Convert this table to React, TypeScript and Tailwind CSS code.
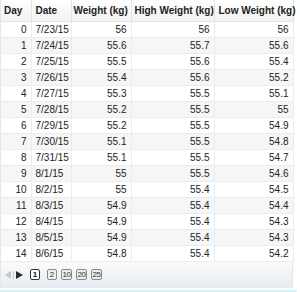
const rows: [number, string, string, string, string][] = [
  [0, "7/23/15", "56", "56", "56"],
  [1, "7/24/15", "55.6", "55.7", "55.6"],
  [2, "7/25/15", "55.5", "55.6", "55.4"],
  [3, "7/26/15", "55.4", "55.6", "55.2"],
  [4, "7/27/15", "55.3", "55.5", "55.1"],
  [5, "7/28/15", "55.2", "55.5", "55"],
  [6, "7/29/15", "55.2", "55.5", "54.9"],
  [7, "7/30/15", "55.1", "55.5", "54.8"],
  [8, "7/31/15", "55.1", "55.5", "54.7"],
  [9, "8/1/15", "55", "55.5", "54.6"],
  [10, "8/2/15", "55", "55.4", "54.5"],
  [11, "8/3/15", "54.9", "55.4", "54.4"],
  [12, "8/4/15", "54.9", "55.4", "54.3"],
  [13, "8/5/15", "54.9", "55.4", "54.3"],
  [14, "8/6/15", "54.8", "55.4", "54.2"],
];

const pages = ["1", "2", "10", "20", "25"];

export default function App() {
  return (
    <div className="w-[300px] h-[292px] bg-white font-['Liberation_Sans',Arial,sans-serif] text-[#222]">
      <div className="w-[293px] border-l border-[#e6e6e6]">
        <table className="table-fixed border-collapse w-[292px] text-[10px]">
          <colgroup>
            <col className="w-[30px]" />
            <col className="w-[40px]" />
            <col className="w-[60px]" />
            <col className="w-[83px]" />
            <col className="w-[79px]" />
          </colgroup>
          <thead>
            <tr className="h-[21px] bg-gradient-to-b from-white to-[#f1f1f1] font-bold text-[#222]">
              <th className="text-left px-[3px] border-r border-b border-[#e4e4e4]">Day</th>
              <th className="text-left px-[4px] border-r border-b border-[#e4e4e4]">Date</th>
              <th className="text-left px-[2px] border-r border-b border-[#e4e4e4] whitespace-nowrap">Weight (kg)</th>
              <th className="text-left px-[3px] border-r border-b border-[#e4e4e4] whitespace-nowrap">High Weight (kg)</th>
              <th className="text-left px-[4px] border-r border-b border-[#e4e4e4] whitespace-nowrap">Low Weight (kg)</th>
            </tr>
          </thead>
          <tbody>
            {rows.map((r, i) => (
              <tr key={r[0]} className={`h-[16px] ${i % 2 ? "bg-[#f6f6f6]" : "bg-white"}`}>
                <td className="text-right px-[4px] py-0 leading-[15px] border-r border-b border-[#ececec]">{r[0]}</td>
                <td className="text-left px-[4px] py-0 leading-[15px] border-r border-b border-[#ececec]">{r[1]}</td>
                <td className="text-right px-[4px] py-0 leading-[15px] border-r border-b border-[#ececec]">{r[2]}</td>
                <td className="text-right px-[4px] py-0 leading-[15px] border-r border-b border-[#ececec]">{r[3]}</td>
                <td className="text-right px-[4px] py-0 leading-[15px] border-r border-b border-[#ececec]">{r[4]}</td>
              </tr>
            ))}
          </tbody>
        </table>
        {/* paging bar */}
        <div className="h-[26px] flex items-center pl-[4px] bg-gradient-to-b from-[#fafbfc] to-[#e6ebf1] border-r border-[#e4e4e4]">
          <div className="flex items-center gap-[2px]">
            <svg width="6" height="8" viewBox="0 0 6 8">
              <path d="M6 0 L0 4 L6 8 Z" fill="#c4c8cc" />
            </svg>
            <div className="w-[1px] h-[8px] bg-[#c8cdd2]" />
            <svg width="7" height="8" viewBox="0 0 7 8">
              <path d="M0 0 L7 4 L0 8 Z" fill="#2a2a2a" />
            </svg>
          </div>
          <div className="flex items-center gap-[4px] ml-[7px]">
            {pages.map((p, i) => (
              <span
                key={p}
                className={`h-[11px] rounded-[2px] flex items-center justify-center text-[8px] leading-none ${
                  p.length > 1 ? "w-[11px] tracking-[-0.4px]" : "w-[10px]"
                } ${
                  i === 0
                    ? "border border-[#333] bg-white font-bold text-[#111] mr-[3px]"
                    : "border border-[#8a8a8a] bg-[#eeeeee] text-[#333]"
                }`}
              >
                {p}
              </span>
            ))}
          </div>
        </div>
      </div>
      <div className="mt-[2px] w-[297px] h-[3px] bg-[#d3f3f6]" />
    </div>
  );
}
